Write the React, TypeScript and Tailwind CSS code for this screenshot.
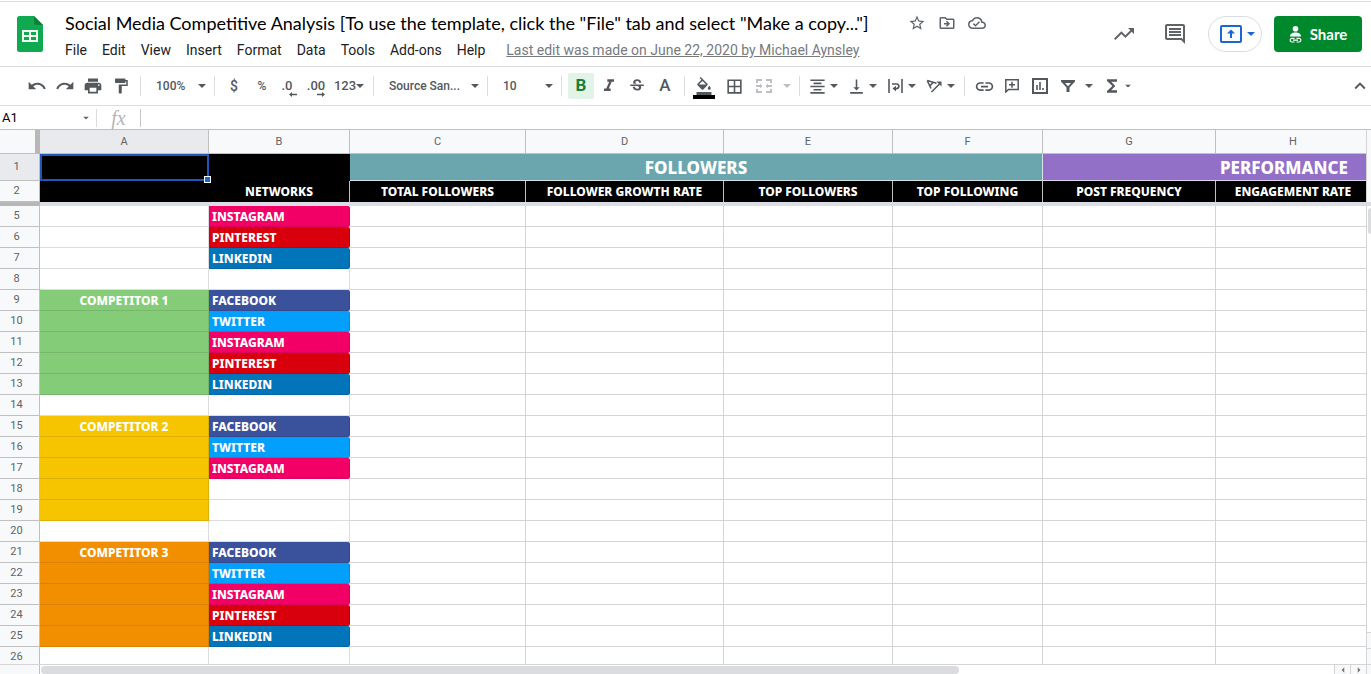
import type { ReactNode } from 'react'
import {
  MdBorderAll,
  MdExpandLess,
  MdFormatAlignCenter,
  MdFormatColorFill,
  MdFormatItalic,
  MdFormatPaint,
  MdFunctions,
  MdLink,
  MdOutlineCloudDone,
  MdOutlineComment,
  MdOutlineDriveFileMove,
  MdPrint,
  MdRedo,
  MdStarBorder,
  MdStrikethroughS,
  MdTrendingUp,
  MdUndo,
  MdVerticalAlignBottom,
} from 'react-icons/md'

const MENUS = ['File', 'Edit', 'View', 'Insert', 'Format', 'Data', 'Tools', 'Add-ons', 'Help']

const COLUMNS = [
  { name: 'A', width: 'w-[169px]' },
  { name: 'B', width: 'w-[141px]' },
  { name: 'C', width: 'w-[176px]' },
  { name: 'D', width: 'w-[198px]' },
  { name: 'E', width: 'w-[169px]' },
  { name: 'F', width: 'w-[150px]' },
  { name: 'G', width: 'w-[173px]' },
  { name: 'H', width: '' },
]

const HEADINGS = [
  'NETWORKS',
  'TOTAL FOLLOWERS',
  'FOLLOWER GROWTH RATE',
  'TOP FOLLOWERS',
  'TOP FOLLOWING',
  'POST FREQUENCY',
  'ENGAGEMENT RATE',
]

const NETWORK_COLORS: Record<string, string> = {
  FACEBOOK: 'bg-[#3a529b]',
  TWITTER: 'bg-[#029ffd]',
  INSTAGRAM: 'bg-[#f30067]',
  PINTEREST: 'bg-[#d9000d]',
  LINKEDIN: 'bg-[#0274b9]',
}

type Row = { n: number; group?: string; label?: string; network?: string }

const GREEN = 'bg-[#85cc79]'
const YELLOW = 'bg-[#f6c500]'
const ORANGE = 'bg-[#f18f01]'

const ROWS: Row[] = [
  { n: 5, network: 'INSTAGRAM' },
  { n: 6, network: 'PINTEREST' },
  { n: 7, network: 'LINKEDIN' },
  { n: 8 },
  { n: 9, group: GREEN, label: 'COMPETITOR 1', network: 'FACEBOOK' },
  { n: 10, group: GREEN, network: 'TWITTER' },
  { n: 11, group: GREEN, network: 'INSTAGRAM' },
  { n: 12, group: GREEN, network: 'PINTEREST' },
  { n: 13, group: GREEN, network: 'LINKEDIN' },
  { n: 14 },
  { n: 15, group: YELLOW, label: 'COMPETITOR 2', network: 'FACEBOOK' },
  { n: 16, group: YELLOW, network: 'TWITTER' },
  { n: 17, group: YELLOW, network: 'INSTAGRAM' },
  { n: 18, group: YELLOW },
  { n: 19, group: YELLOW },
  { n: 20 },
  { n: 21, group: ORANGE, label: 'COMPETITOR 3', network: 'FACEBOOK' },
  { n: 22, group: ORANGE, network: 'TWITTER' },
  { n: 23, group: ORANGE, network: 'INSTAGRAM' },
  { n: 24, group: ORANGE, network: 'PINTEREST' },
  { n: 25, group: ORANGE, network: 'LINKEDIN' },
  { n: 26 },
]

function SheetsLogo() {
  return (
    <svg className="h-9 w-[26px] shrink-0" viewBox="0 0 26 36">
      <path d="M2.5 0H17l9 9v24.5a2.5 2.5 0 0 1-2.5 2.5h-21A2.5 2.5 0 0 1 0 33.5v-31A2.5 2.5 0 0 1 2.5 0z" fill="#0fa94f" />
      <path d="M17 0l9 9h-6.500A2.500 2.500 0 0 1 17 6.500z" fill="#0b8039" />
      <path d="M5 14h16v12H5zm2 2v3h5v-3zm7 0v3h5v-3zm-7 5v3h5v-3zm7 0v3h5v-3z" fill="#f1fbf4" fillRule="evenodd" />
    </svg>
  )
}

function Caret({ className = '' }: { className?: string }) {
  return (
    <svg className={`h-1 w-2 shrink-0 fill-current ${className}`} viewBox="0 0 8 4">
      <path d="M0 0h8L4 4z" />
    </svg>
  )
}

function Tool({ label, className = 'w-[26px] justify-center', children }: { label: string; className?: string; children: ReactNode }) {
  return (
    <button aria-label={label} className={`flex h-[26px] shrink-0 items-center rounded-xs ${className}`}>
      {children}
    </button>
  )
}

function Picker({ label, value, className }: { label: string; value: string; className: string }) {
  return (
    <div className={`relative flex shrink-0 items-center ${className}`}>
      <select aria-label={label} className="h-[26px] w-full appearance-none bg-transparent pl-[9px] pr-4 outline-none">
        <option>{value}</option>
      </select>
      <Caret className="pointer-events-none absolute right-[2px]" />
    </div>
  )
}

function Separator() {
  return <div className="mx-1 h-5 w-px shrink-0 bg-[#dadce0]" />
}

function Header() {
  return (
    <header className="flex items-start border-t border-b border-[#dadce0] pr-[9px] pl-[17px] pt-[14px]">
      <SheetsLogo />
      <div className="ml-[22px] flex min-w-0 flex-col pb-[3px]">
        <div className="-mt-[6px] mb-px flex h-[26px] items-center">
          <h1 className="font-[Lato,sans-serif] text-[18px] leading-[26px] whitespace-nowrap text-black">
            Social Media Competitive Analysis [To use the template, click the "File" tab and select "Make a copy..."]
          </h1>
          <div className="ml-10 flex gap-[12px] text-[#5f6368]">
            <button aria-label="Star"><MdStarBorder size={18} /></button>
            <button aria-label="Move"><MdOutlineDriveFileMove size={18} /></button>
            <button aria-label="Document status"><MdOutlineCloudDone size={18} /></button>
          </div>
        </div>
        <nav className="flex h-[26px] items-center gap-[15px] text-sm whitespace-nowrap text-[#202124]">
          {MENUS.map((menu) => (
            <button key={menu}>{menu}</button>
          ))}
          <a href="#history" className="ml-[6px] text-[#777a7e] underline">
            Last edit was made on June 22, 2020 by Michael Aynsley
          </a>
        </nav>
      </div>
      <div className="ml-auto flex h-9 shrink-0 items-center text-[#5f6368]">
        <button aria-label="Activity" className="mr-[27px]"><MdTrendingUp size={24} /></button>
        <button aria-label="Comments" className="mr-[21px]"><MdOutlineComment size={24} /></button>
        <button aria-label="Present" className="mr-3 flex h-9 w-[54px] items-center justify-center gap-[5px] rounded-full border border-[#dadce0] pl-1 text-[#1a67d2]">
          <svg className="h-[18px] w-[22px]" viewBox="0 0 22 18">
            <rect x="1" y="1" width="20" height="16" rx="1" fill="none" stroke="currentColor" strokeWidth="2" />
            <path d="M11 4.500l4 4h-3V13h-2V8.500H7z" fill="currentColor" />
          </svg>
          <Caret />
        </button>
        <button className="flex h-9 w-[88px] items-center justify-center gap-2 rounded-sm bg-[#00882d] font-[Lato,sans-serif] text-[15px] font-bold text-white">
          <svg className="h-[17px] w-[13px]" viewBox="0 0 13 17" fill="white">
            <circle cx="6.500" cy="2.800" r="2.800" />
            <path d="M1 10.500C1 7.800 3.500 6.500 6.500 6.500S12 7.800 12 10.500z" />
            <path d="M5.500 12.300H3a1.800 1.800 0 0 0 0 3.700h2.500M7.500 12.300H10a1.800 1.800 0 0 1 0 3.700H7.500M4 14.150h5" fill="none" stroke="white" strokeWidth="1.200" />
          </svg>
          Share
        </button>
      </div>
    </header>
  )
}

function Toolbar() {
  return (
    <div className="flex h-[39px] shrink-0 items-center gap-[2px] border-b border-[#dadce0] pl-6 text-[12px] font-medium text-[#54585c]">
      <Tool label="Undo"><MdUndo size={20} /></Tool>
      <Tool label="Redo"><MdRedo size={20} /></Tool>
      <Tool label="Print"><MdPrint size={20} /></Tool>
      <Tool label="Paint format"><MdFormatPaint size={18} /></Tool>
      <Separator />
      <Picker label="Zoom" value="100%" className="w-[61px]" />
      <Separator />
      <Tool label="Format as currency"><span className="text-sm">$</span></Tool>
      <Tool label="Format as percent">%</Tool>
      <Tool label="Decrease decimal places" className="relative w-6 justify-center pr-1">
        <span className="text-[13px]">.0</span>
        <svg className="absolute right-1 bottom-[2px] h-[5px] w-2" viewBox="0 0 8 5" fill="currentColor"><path d="M0 2.500L3 0v1.700h5v1.600H3V5z" /></svg>
      </Tool>
      <Tool label="Increase decimal places" className="relative w-[26px] justify-center">
        <span className="text-[13px]">.00</span>
        <svg className="absolute right-1 bottom-[2px] h-[5px] w-2" viewBox="0 0 8 5" fill="currentColor"><path d="M8 2.500L5 0v1.700H0v1.600h5V5z" /></svg>
      </Tool>
      <Tool label="More formats" className="w-9 justify-center"><span className="text-[13px]">123</span><Caret /></Tool>
      <Separator />
      <Picker label="Font" value="Source San..." className="w-[101px]" />
      <Separator />
      <Picker label="Font size" value="10" className="w-[61px]" />
      <Separator />
      <Tool label="Bold" className="w-[26px] justify-center bg-[#e2f3e8]">
        <span className="text-[17px] font-bold text-[#178038]">B</span>
      </Tool>
      <Tool label="Italic"><MdFormatItalic size={20} /></Tool>
      <Tool label="Strikethrough"><MdStrikethroughS size={18} /></Tool>
      <Tool label="Text color"><span className="text-[17px]">A</span></Tool>
      <Separator />
      <Tool label="Fill color" className="relative w-[26px] justify-center">
        <MdFormatColorFill size={18} />
        <span className="absolute inset-x-[2px] bottom-0 h-1 bg-black" />
      </Tool>
      <Tool label="Borders" className="w-[30px] justify-center"><MdBorderAll size={19} /></Tool>
      <Tool label="Merge cells" className="w-[42px] justify-between pl-[5px] text-[#bdbfc2]">
        <svg className="h-[14px] w-4" viewBox="0 0 16 14" fill="none" stroke="currentColor" strokeWidth="2">
          <path d="M1 4V1h5M10 1h5v3M1 10v3h5M10 13h5v-3M0 7h5M16 7h-5" />
          <path d="M4 4.500L6.500 7 4 9.500zM12 4.500L9.500 7l2.500 2.500z" fill="currentColor" stroke="none" />
        </svg>
        <Caret className="mr-[2px]" />
      </Tool>
      <Separator />
      <Tool label="Horizontal align" className="w-[37px] justify-between pr-[5px] pl-[2px]"><MdFormatAlignCenter size={19} /><Caret /></Tool>
      <Tool label="Vertical align" className="w-[37px] justify-between pr-[5px] pl-[2px]"><MdVerticalAlignBottom size={19} /><Caret /></Tool>
      <Tool label="Text wrapping" className="w-[37px] justify-between pr-[5px] pl-1">
        <svg className="h-[14px] w-[15px]" viewBox="0 0 15 14" fill="none" stroke="currentColor">
          <path d="M1 0v14M14 0v14" strokeWidth="1.600" />
          <path d="M4 5h4.500a2.300 2.300 0 0 1 0 4.600H7" strokeWidth="1.700" />
          <path d="M8 6.800v5.600L4.500 9.600z" fill="currentColor" stroke="none" />
        </svg>
        <Caret />
      </Tool>
      <Tool label="Text rotation" className="w-[35px] justify-between pr-[3px] pl-[3px]">
        <svg className="h-[14px] w-4" viewBox="0 0 16 14" fill="none" stroke="currentColor" strokeWidth="1.600">
          <path d="M1.200 1.500l9.300 2.700M1.200 1.500L5 9.500M7 3.500L3.800 7M5.500 13l8-8" />
          <path d="M15.500 2.500v5l-5-5z" fill="currentColor" stroke="none" />
        </svg>
        <Caret />
      </Tool>
      <Separator />
      <Tool label="Insert link"><MdLink size={21} /></Tool>
      <Tool label="Insert comment">
        <svg className="h-[14px] w-[14px]" viewBox="0 0 14 14" fill="none" stroke="currentColor" strokeWidth="1.500">
          <path d="M.8.800h12.400v9.700H3.500L.8 13z" />
          <path d="M7 2.800v6M4 5.800h6" />
        </svg>
      </Tool>
      <Tool label="Insert chart">
        <svg className="h-4 w-4" viewBox="0 0 16 16" fill="none" stroke="currentColor" strokeWidth="2">
          <path d="M1 1h14v14H1z" />
          <path d="M5 12V7M8 12V4M11 12v-2" strokeWidth="1.600" />
        </svg>
      </Tool>
      <Tool label="Create a filter" className="w-[42px] justify-between pr-1 pl-[6px]">
        <svg className="h-3 w-[14px]" viewBox="0 0 14 12" fill="currentColor">
          <path d="M0 0h14v1.500L8.500 7.500V12h-3V7.500L0 1.500zM4 3l3 3.200L10 3z" fillRule="evenodd" />
        </svg>
        <Caret />
      </Tool>
      <Tool label="Functions" className="w-[38px] justify-between pr-[5px] pl-[3px]"><MdFunctions size={20} /><Caret className="scale-75" /></Tool>
      <Tool label="Hide the menus" className="ml-auto w-[22px] justify-center"><MdExpandLess size={22} /></Tool>
    </div>
  )
}

function FormulaBar() {
  return (
    <div className="flex h-6 shrink-0 items-center border-b border-[#c0c0c0]">
      <div className="relative flex w-24 items-center">
        <input aria-label="Name box" defaultValue="A1" className="w-full pl-[2px] text-[13px] text-black outline-none" />
        <Caret className="absolute right-[6px] scale-75 text-[#5f6368]" />
      </div>
      <div className="h-[18px] w-px bg-[#dadce0]" />
      <label htmlFor="formula" className="w-[43px] text-center font-['Liberation_Serif',serif] text-[20px] leading-5 text-[#b5b5b5] italic">fx</label>
      <div className="h-[18px] w-px bg-[#c6c6c6]" />
      <input id="formula" className="min-w-0 flex-1 px-2 text-[13px] outline-none" />
    </div>
  )
}

function RowHeader({ n, selected = false }: { n: number; selected?: boolean }) {
  return (
    <th className={`border-r border-b border-[#c0c0c0] p-0 pr-[6px] font-[Roboto,sans-serif] text-[11px] leading-4 font-normal text-[#5f6368] ${selected ? 'bg-[#e8eaed]' : 'bg-[#f8f9fa]'}`}>
      {n}
    </th>
  )
}

function Sheet() {
  return (
    <table className="w-full table-fixed border-separate border-spacing-0 whitespace-nowrap">
      <colgroup>
        <col className="w-10" />
        {COLUMNS.map(({ name, width }) => (
          <col key={name} className={width} />
        ))}
      </colgroup>
      <thead>
        <tr className="h-6">
          <td className="border-r-5 border-b border-[#b7b7b7] border-b-[#c0c0c0] bg-[#f8f9fa] p-0" />
          {COLUMNS.map(({ name }) => (
            <th key={name} className={`border-r border-b border-[#c0c0c0] p-0 text-[11px] leading-4 font-normal text-[#5f6368] last:border-r-0 last:pl-1 ${name === 'A' ? 'bg-[#e8eaed]' : 'bg-[#f8f9fa]'}`}>
              {name}
            </th>
          ))}
        </tr>
      </thead>
      <tbody className="font-['Source_Sans_Pro','Noto_Sans',sans-serif] text-[12px] leading-4 font-extrabold">
        <tr className="h-[27px] text-[17px] text-white">
          <RowHeader n={1} selected />
          <td className="relative bg-black p-0">
            <div className="absolute inset-0 border-2 border-[#1f57b8]" />
            <div className="absolute -right-[2px] -bottom-[2px] z-10 size-[7px] border border-white bg-[#1a67d2]" />
          </td>
          <td className="bg-black p-0" />
          <td colSpan={4} className="border-r border-b border-white/70 bg-[#6ba6ae] p-0 pt-[2px] text-center">FOLLOWERS</td>
          <td colSpan={2} className="border-b border-white/70 bg-[#9370c7] p-0 pt-[2px] pr-[18px] text-right">PERFORMANCE</td>
        </tr>
        <tr className="h-[21px] text-white">
          <RowHeader n={2} />
          <td className="bg-black p-0" />
          {HEADINGS.map((heading) => (
            <td key={heading} className="border-r border-[#c0c0c0] bg-black p-0 text-center last:border-r-0 last:pl-1">
              {heading}
            </td>
          ))}
        </tr>
        <tr className="h-1">
          <td className="bg-[#b7b7b7] p-0" />
          <td colSpan={8} className="bg-[#dadde6] p-0" />
        </tr>
        {ROWS.map(({ n, group, label, network }) => (
          <tr key={n} className="h-[21px]">
            <RowHeader n={n} />
            <td className={`border-r border-b p-0 pt-[2px] text-center text-white ${group ? `border-black/10 ${group}` : 'border-[#dcdcdc]'}`}>{label}</td>
            <td className={`border-r border-b p-0 pt-[2px] pl-[3px] text-white ${network ? `rounded-r-xs border-black/10 ${NETWORK_COLORS[network]}` : 'border-[#dcdcdc]'}`}>
              {network}
            </td>
            {COLUMNS.slice(2).map(({ name }) => (
              <td key={name} className="border-r border-b border-[#d5d5d5] p-0 last:border-r-0" />
            ))}
          </tr>
        ))}
      </tbody>
    </table>
  )
}

export default function App() {
  return (
    <div className="flex h-screen flex-col overflow-hidden bg-white font-[Roboto,sans-serif]">
      <div className="h-px shrink-0" />
      <Header />
      <Toolbar />
      <FormulaBar />
      <main className="flex min-h-0 flex-1">
        <div className="min-w-0 flex-1 overflow-hidden">
          <Sheet />
        </div>
        {/* Vertical scroll gutter */}
        <div className="flex w-[5px] flex-col border-l border-[#d5d5d5]">
          <div className="h-[72px] bg-[#f8f9fa]" />
          <div className="h-1 bg-[#dadde6]" />
          <div className="mt-[2px] ml-px h-[26px] rounded-l-sm bg-[#dadce0]" />
          <div className="mt-auto h-4 border-t border-[#d5d5d5] bg-[#f8f9fa]" />
          <div className="h-4 border-t border-[#d5d5d5] bg-[#f8f9fa]" />
        </div>
      </main>
      <footer className="flex h-[10px] shrink-0 border-t border-[#d5d5d5]">
        <div className="w-10 border-r border-[#c0c0c0] bg-[#f8f9fa]" />
        <div className="flex-1 pt-px pl-px">
          <div className="h-2 w-[71%] rounded-full bg-[#dadce0]" />
        </div>
        <button aria-label="Scroll left" className="flex w-4 items-center justify-center border-l border-[#d5d5d5] bg-[#f8f9fa] text-[#777]">
          <Caret className="rotate-90 scale-75" />
        </button>
        <button aria-label="Scroll right" className="flex w-4 items-center justify-center border-l border-[#d5d5d5] bg-[#f8f9fa] text-[#777]">
          <Caret className="-rotate-90 scale-75" />
        </button>
        <div className="w-[5px] border-l border-[#d5d5d5] bg-[#f8f9fa]" />
      </footer>
    </div>
  )
}
